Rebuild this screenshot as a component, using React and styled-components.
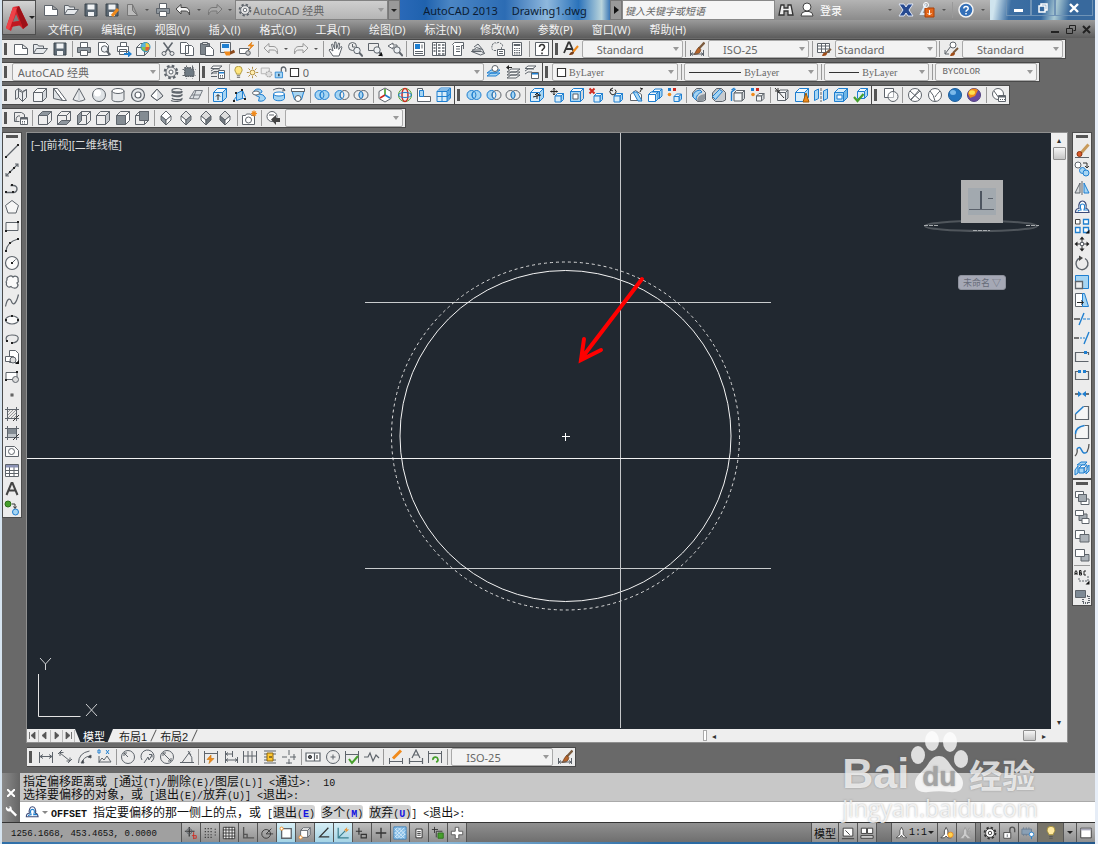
import React from 'react';
import styled, { createGlobalStyle } from 'styled-components';

const COLORS = {
  ink: '#5e646b',
  blue: '#1f7fd0',
  sky: '#a6d5f3',
  frame: '#696969',
  panel: '#ececec',
  canvas: '#212830',
  orange: '#f08a1c',
  red: '#cf2a20',
  green: '#46a02c',
};

const { ink, blue, sky, orange, red, green } = COLORS;

const Box = ({ x = 1.5, y = 5.5, s = 9, d = 4, front = '#f4f5f6', top = '#fafafa', side = '#d4d8dc', stroke = ink }) => (
  <g stroke={stroke}>
    <path d={`M${x} ${y}l${d} ${-d}h${s}l${-d} ${d}z`} fill={top} />
    <path d={`M${x + s} ${y}l${d} ${-d}v${s}l${-d} ${d}z`} fill={side} />
    <path d={`M${x} ${y}h${s}v${s}h${-s}z`} fill={front} />
  </g>
);

const BlueBox = (props) => <Box front="#d9edf9" top="#f2f9fd" side={sky} stroke={blue} {...props} />;

const Face = (props) => <Box s={9} d={4} front="#eee" top="#eee" side="#eee" {...props} />;

const Rings = ({ left = 'none', right = 'none', lens = 'none', ls = ink, rs = ink }) => (
  <>
    <circle cx="5.5" cy="8" r="4.5" fill={left} stroke={ls} />
    <circle cx="10.5" cy="8" r="4.5" fill={right} stroke={rs} />
    <path d="M8 4.3a4.5 4.5 0 0 1 0 7.4a4.5 4.5 0 0 1 0-7.4" fill={lens} stroke={blue} />
  </>
);

const Dots = ({ at, color = '#222' }) => at.map(([x, y]) => (
  <rect key={`${x}-${y}`} x={x - 1} y={y - 1} width="2" height="2" fill={color} stroke="none" />
));

const Lens = ({ x = 9, y = 9 }) => (
  <>
    <circle cx={x} cy={y} r="3.2" fill="#eef1f4" />
    <path d={`M${x + 2.3} ${y + 2.3}l3.5 3.7`} strokeWidth="2" />
  </>
);

const Brush = () => (
  <>
    <path d="M15.5 1.5L9.5 8" stroke="#7b5b3e" strokeWidth="2.4" />
    <path d="M9.8 6.5l2 2c-.5 4-3 5-7 5c2-1.5 2-5 5-7z" fill="#b5642a" stroke="#6a3512" strokeWidth=".7" />
  </>
);

const Bulb = ({ glow = '#ffe680' }) => (
  <>
    <path d="M5.5 10c0-2-2-3-2-5.2a4.5 4.5 0 0 1 9 0c0 2.2-2 3.2-2 5.2z" fill={glow} stroke="#a08a30" />
    <path d="M6 12h4M6 14h4" stroke="#555" />
  </>
);

const Gear = ({ fill = '#e8e8e8' }) => (
  <>
    <circle cx="8" cy="8" r="6.2" strokeWidth="2.2" strokeDasharray="2.6 2.27" />
    <circle cx="8" cy="8" r="5" fill={fill} />
    <circle cx="8" cy="8" r="2" fill="#fff" />
  </>
);

const Layers = () => (
  <path d="M1 12l4-3h9l-4 3zM1 9l4-3h9l-4 3zM1 6l4-3h9l-4 3z" fill="#f4f4f4" />
);

const Diamond = ({ a = '#fff', b = '#fff', c = '#fff' }) => (
  <>
    <path d="M8 1l5 5l-5 4l-5-4z" fill={a} />
    <path d="M3 6l5 4v5l-5-5z" fill={b} />
    <path d="M13 6l-5 4v5l5-5z" fill={c} />
  </>
);

const icons = {
  new: <path d="M1.5 3.5h8l5 4v6h-13zM9.5 3.5v4h5" fill="#fff" />,
  open: <path d="M1.5 12.5v-9h4l1 1.5h5v2.5M1.5 12.5l3-5h11l-4 5z" fill="#e6e9ec" />,
  save: (
    <>
      <path d="M2 2h12v12h-12z" fill="#5c6873" stroke="#3b444c" />
      <path d="M4.5 2.5h7v5h-7zM5 10h6v4h-6z" fill="#f1f3f5" stroke="none" />
    </>
  ),
  saveas: (
    <>
      <path d="M2 2h12v12h-12z" fill="#5c6873" stroke="#3b444c" />
      <path d="M4.5 2.5h7v5h-7zM5 10h6v4h-6z" fill="#f1f3f5" stroke="none" />
      <path d="M8 14l6-7" stroke={orange} strokeWidth="3" />
    </>
  ),
  export: <path d="M3.5 13.5v-11h5l5 11zM8.5 2.5v6l5 5" fill="#bbb" stroke="#777" />,
  print: (
    <>
      <path d="M4.5 6.5v-5h7v5" fill="#fff" />
      <path d="M1.5 6.5h13v5h-13z" fill="#8f979e" />
      <path d="M4.5 9.5h7v5h-7z" fill="#fff" />
    </>
  ),
  preview: <><path d="M2.5 1.5h7l3 3v10h-10z" fill="#fff" /><Lens x={8.5} y={8} /></>,
  publish: (
    <>
      <path d="M4.5 5.5v-4h6v4M1.5 5.5h11v5h-11zM3.5 8.5h7v5h-7z" fill="#fff" />
      <path d="M8 12h4v-2.5l4 3.5l-4 3.5v-2.5h-4z" fill={blue} stroke="none" />
    </>
  ),
  dwf: (
    <>
      <Box x={1.5} y={6.5} s={8} d={4} />
      <circle cx="10.5" cy="6" r="4.5" fill="#7cc45a" stroke="#258cc4" />
      <path d="M10.5 6v-4a4 4 0 0 1 4 4z" fill="#f5c842" stroke="none" />
      <path d="M10.5 6h-4a4 4 0 0 1 4-4z" fill="#58b3e4" stroke="none" />
      <path d="M10.5 6v4a4 4 0 0 0 4-4z" fill="#e2603a" stroke="none" />
    </>
  ),
  cut: (
    <>
      <path d="M3.5 1.5l7 9.5M12.5 1.5l-7 9.5" strokeWidth="1.5" />
      <circle cx="4" cy="12.5" r="2" /><circle cx="12" cy="12.5" r="2" />
    </>
  ),
  copy: <path d="M1.5 1.5h6l2 2v9h-8zM6.5 4.5h6l2 2v8h-8z" fill="#fff" />,
  paste: (
    <>
      <path d="M1.5 2.5h9v11h-9z" fill="#7d858c" />
      <path d="M3.5 1.5h5v2h-5z" fill="#ddd" />
      <path d="M6.5 5.5h5l3 3v6h-8z" fill="#fff" />
    </>
  ),
  match: (
    <>
      <path d="M1.5 1.5h10v10h-10z" fill="#e9f3fb" />
      <path d="M3 3h7v4h-7z" fill={blue} stroke="none" />
      <path d="M15.5 10l-5 2.5" stroke="#8b4a1c" strokeWidth="3" />
      <path d="M5 10.5h6v4h-4z" fill={orange} stroke="none" />
    </>
  ),
  block: (
    <>
      <path d="M1.5 7.5h9v5h-9z" fill="#fff" /><circle cx="10" cy="12" r="2.3" fill="#ccc" />
      <path d="M14 1l-4 4h3l-2 4l5-5h-3z" fill={orange} stroke="#d77508" strokeWidth=".5" />
    </>
  ),
  undo: <path d="M1 7l5-4.5v3h4c3 0 5 2 4.5 7.5c-1-3-2-4-4.5-4h-4v3z" fill="#eee" stroke="#999" />,
  redo: <path d="M15 7l-5-4.5v3h-4c-3 0-5 2-4.5 7.5c1-3 2-4 4.5-4h4v3z" fill="#eee" stroke="#999" />,
  undoDark: <path d="M1 7l5-4.5v3h4c3 0 5 2 4.5 7.5c-1-3-2-4-4.5-4h-4v3z" fill="#f4f4f4" stroke="#444" />,
  redoDark: <path d="M15 7l-5-4.5v3h-4c-3 0-5 2-4.5 7.5c1-3 2-4 4.5-4h4v3z" fill="#aaa" stroke="#777" />,
  pan: <path d="M5 15l-4-6l1-1l3 2l-1.5-6.5l1.2-.5l2 5v-7h1.3l.7 6.5l1.8-5.5l1.2.4l-1 6l2.3-3l1 .8l-3 8.8z" fill="#fff" />,
  zoom: <><circle cx="5.5" cy="5.5" r="4" /><path d="M5.5 3v3h3" /><Lens x={10} y={9.5} /></>,
  zoomwin: (
    <><path d="M9 9.5h-7.5v-7h10v4" fill="none" /><Lens x={10} y={9} /><path d="M15 15v-4l-4 4z" fill="#111" stroke="none" /></>
  ),
  zoomprev: <><path d="M6 8l-5-3l5-3v2h4v2h-4z" fill="#fff" /><Lens x={10} y={9} /></>,
  props: (
    <><path d="M2.5 1.5h11v13h-11z" fill="#fff" /><path d="M4 3h5v5h-5z" fill={blue} stroke="none" /><path d="M4 10.5h8M4 12.5h8M11 3.5v4" /></>
  ),
  center: <><path d="M1.5 1.5h13v13h-13zM5.5 1.5v13" fill="#fff" /><path d="M2.5 4h2M2.5 7h2M2.5 10h2M7 4h2.5M7 7h2.5M7 10h2.5M7 13h2.5M11 4h2.5M11 7h2.5M11 10h2.5M11 13h2.5" strokeWidth="1.7" /></>,
  palette: <path d="M2.5 3.5l2-2h9v3h-2v10h-8v-10zM6 5.5h4M6 8h4M6 10.5h4M13.5 4v4" fill="#fff" />,
  sheet: <path d="M1.5 10.5l5-4l6 2l2 4l-4 1.5zM4 6l4-3l5 6M1.5 10.5l10 0l3 2M2 9l9 0" fill="#e5e7e9" />,
  markup: <><path d="M2.5 4c0-2 3-3 4-1.5c1-1.5 4-1.5 4 0c2 0 3 3 1 4v3h-8c-2-1-2-4-1-5.5z" strokeDasharray="2 1" /><path d="M7.5 8.5h7v6h-7z" fill="#fff" /><path d="M9 10.5h4M9 12.5h4" /></>,
  calc: <><path d="M3.5 1.5h9v13h-9z" fill="#fff" /><path d="M5 3.5h6v1h-6z" fill="#ccc" /><path d="M5 7.5h6M5 9.5h6M5 11.5h6M5 13h6" strokeWidth="1.2" strokeDasharray="1.4 .9" /></>,
  help: <><path d="M1.5 1.5h13v13h-13z" fill="#fff" /><path d="M5.5 6c0-3.5 5-3 5 0c0 2-2.5 2-2.5 4M8 11.5v1.8" strokeWidth="1.6" stroke="#333" /></>,
  textstyle: <><path d="M1 12l4.5-10.5h1l4 9M3 8h6" stroke="#333" strokeWidth="1.8" /><path d="M15 5l-5 6" stroke={orange} strokeWidth="2" /><path d="M6 14c1-3 3-4 5-3c0 3-3 3-5 3z" fill="#7b3e16" stroke="none" /></>,
  dimstyle: <><Brush /><path d="M1.5 9v6M14.5 9v6M2 13h12M4 11.5l-2 1.5l2 1.5M12 11.5l2 1.5l-2 1.5" /></>,
  tablestyle: <><path d="M1.5 2.5h12v9h-12zM1.5 5h12M1.5 8h12M5.5 2.5v9M9.5 2.5v9" fill="#fff" /><path d="M15 8l-5 4" stroke="#7b5b3e" strokeWidth="2" /><path d="M6 15c1-4 3-4 5-3c0 3-3 3-5 3z" fill="#a04d18" stroke="none" /></>,
  leaderstyle: <><circle cx="10" cy="4" r="3" fill="#fff" /><path d="M8 5l-6 8M2 9v4h4" /><path d="M15 7l-5 5" stroke="#7b5b3e" strokeWidth="2" /><path d="M7 15c1-4 3-4 5-3c0 3-3 3-5 3z" fill="#a04d18" stroke="none" /></>,
  gear: <Gear />,
  workspace: <><path d="M3.5 3.5h9v9h-9zM1.5 5.5h13M1.5 11.5h13M5.5 1.5v13M11.5 1.5v13" strokeDasharray="1.5 1" /><path d="M4 4h5l4 3v5h-9z" fill="#6f7a83" /></>,
  layerprops: <><path d="M3 2h9l-3 2.5h-8zM1 7l3-2h6M1 9.5l3-2h4M1 12.5h6M1 10l2-1h4" fill="#fff" /><path d="M8.5 6.5h6v8h-6z" fill="#fff" /><path d="M9 8h5v1.5h-5z" fill={blue} stroke="none" /><path d="M10 11.5h4M10 13h4" strokeDasharray="1 1" /></>,
  bulb: <Bulb />,
  sun: <><circle cx="8" cy="8" r="3" fill="#ffeeb0" stroke="#a07820" /><path d="M8 1v2.5M8 12.5v2.5M1 8h2.5M12.5 8h2.5M3 3l2 2M11 11l2 2M13 3l-2 2M5 11l-2 2" stroke="#a07820" /></>,
  vpfreeze: <><path d="M1.5 2.5h10v7h-10z" fill="#eee" stroke="#aaa" /><circle cx="11" cy="10" r="3.5" fill="#ddd" stroke="#aaa" strokeWidth="1.5" strokeDasharray="2 1" /></>,
  unlock: <><path d="M9 7v-3a2.5 2.5 0 0 1 5.5 0v3" stroke={ink} strokeWidth="1.6" /><path d="M1.5 7.5h9v7h-9z" fill={sky} stroke={blue} /><path d="M6 9.5v3" stroke="#123" strokeWidth="1.5" /></>,
  swatch: <path d="M3 3h10v10h-10z" fill="#fff" stroke="#333" strokeWidth="1.3" />,
  layermake: <><path d="M1 12l4-3h9l-4 3zM1 9l4-3h9l-4 3z" fill={sky} stroke={blue} /><circle cx="9" cy="4.5" r="3" fill="#fff" /></>,
  layerprev: <><g transform="translate(1 2)"><Layers /></g><path d="M1 3.5l3-2.5v5z" fill="#222" stroke="none" /><path d="M3 3.5h4" stroke="#222" /></>,
  layerstate: <><path d="M4 2h8l-3 2.5h-8zM1 7l3-2h6M1 10l3-2h4" fill="#fff" /><path d="M7.5 8.5h7v6h-7z" fill="#fff" /><path d="M8 9h6v1.5h-6z" fill={blue} stroke="none" /></>,
  polysolid: <path d="M2.5 3.5l3-2v9l-3 2zM5.5 3.5l4 2v9l-4-4M9.5 5.5l4-3v8l-4 4M5.5 1.5l4 3l4-2" fill="#e8eaec" />,
  box: <Box />,
  wedge: <><path d="M1.5 1.5l4 0l9 12l-4 0z" fill="#fff" /><path d="M1.5 1.5v10l9 2z" fill="#dfe3e6" /></>,
  cone: <><path d="M8 1.5l-6 11q6 3.5 12 0z" fill="#e8eaec" /><path d="M8 4v10" stroke="#d2d6da" strokeWidth="2" /></>,
  sphere: <><circle cx="8" cy="8" r="6.5" fill="#dfe3e6" /><circle cx="6.5" cy="6" r="3.5" fill="#fff" stroke="none" /></>,
  cylinder: <><path d="M2 4v8.5c0 3 12 3 12 0v-8.5" fill="#e8eaec" /><ellipse cx="8" cy="4" rx="6" ry="2.5" fill="#fff" /></>,
  torus: <><circle cx="8" cy="8" r="6.5" fill="#e8eaec" strokeWidth="1.2" /><circle cx="8" cy="8" r="3" fill="#fff" strokeWidth="1.2" /></>,
  pyramid: <><path d="M8 2l-6 7l6 4.5l6-4.5z" fill="#fff" /><path d="M8 2v11.5l6-4.5z" fill="#dcdfe2" stroke="none" /><path d="M14 9l-6 4.5l-6-4.5l6-7z" /></>,
  helix: <path d="M13 3c-3-2.5-11-1.5-10 .5s10 1.5 10 .5M13 4.5c1 2.5-11 2-10 0M3 7.5c1 2 11 1.5 10-.5M13 7.5c1 3-11 2.5-10 .5M3 11c1 2.5 11 2 10 0M13 11.5c0 3.5-8 3.5-11 2" strokeWidth="1.2" />,
  planar: <path d="M1.5 11.5l5-8l8 0l-4 8.5zM4 8l9 0M8 3.5l-3 8" fill="#dfe3e6" stroke="#777d84" />,
  extrude: <><BlueBox /><path d="M6 13v-5M4 9.5l2-2l2 2" stroke="#222" /></>,
  presspull: <><path d="M4.5 6.5l6-3v8l-6 2zM10.5 3.5l3 7M10.5 11.5l3 0M1.5 13.5l3-4" fill={sky} stroke={blue} /><Dots at={[[4, 6], [10, 3], [2, 14], [13, 12]]} /></>,
  sweep: <><path d="M3 5c0-4 8-4 8 0l-3 2q5 0 6.5 4q-1 4-7 3l1-4q-5-1-5.5-5z" fill={sky} stroke={blue} /><ellipse cx="5" cy="6" rx="3.5" ry="2" fill="#fff" stroke={ink} /></>,
  revolve: <><path d="M2.5 7v4.5c1 3 10 3 11 0v-4.5" fill={sky} stroke={blue} /><ellipse cx="8" cy="7" rx="5.5" ry="2" fill="#fff" stroke={blue} /><path d="M2 3q6-3.5 12 0M12 1l2 2.5l-3 .5" /></>,
  loft: <><path d="M1.5 2.5l3 10h7l3-10z" fill={sky} stroke={blue} /><path d="M1.5 1.5h13v3h-13z" fill="#fff" /><circle cx="8" cy="11.5" r="3" fill="#fff" /></>,
  union: <Rings left={sky} right={sky} ls={blue} rs={blue} />,
  subtract: <Rings left={sky} ls={blue} right="#ececec" />,
  intersect: <Rings lens={sky} />,
  gizmo: <><path d="M8 1l6 3.5v7l-6 3.5l-6-3.5v-7z" fill="#fff" /><path d="M8 8v-6" stroke={green} strokeWidth="1.6" /><path d="M8 8l-5 3" stroke={red} strokeWidth="1.6" /><path d="M8 8l5 3" stroke={blue} strokeWidth="1.6" /></>,
  rotate3d: <><circle cx="8" cy="8" r="6.5" stroke={green} /><ellipse cx="8" cy="8" rx="3" ry="6.5" stroke={red} strokeWidth="1.5" /><ellipse cx="8" cy="8" rx="6.5" ry="2.5" stroke={blue} /></>,
  align: <><path d="M1.5 1.5h5v8h8v5h-13z" fill="#fff" /><path d="M3.5 3.5h4v6h-4z" fill={sky} stroke={blue} /></>,
  array3d: <><BlueBox x={1} y={4.5} s={10} d={3.5} /><path d="M1 9.5h10l4-3M6 4.5v10M3 3h10v9" stroke={blue} /></>,
  extrudeface: <><BlueBox /><path d="M8 12v-6M6 8l2-2l2 2M4 10l8-2" stroke="#222" /></>,
  moveface: <><BlueBox x={6} y={9} s={6} d={2.5} /><path d="M5 1v7M1.5 4.5h7M4 2.3l1-1l1 1M4 6.8l1 1l1-1M2.8 3.5l-1 1l1 1M7.3 3.5l1 1l-1 1" stroke="#222" /></>,
  offsetface: <><Box x={1.5} y={4.5} s={10} d={3} stroke={blue} front={sky} /><path d="M4 7h5v5h-5z" fill="#fff" /></>,
  deleteface: <><BlueBox x={6} y={9} s={6} d={2.5} /><path d="M1.5 1.5l5 5M6.5 1.5l-5 5" stroke={red} strokeWidth="2" /></>,
  rotateface: <><BlueBox x={6} y={9} s={6} d={2.5} /><path d="M3 2.5a3 3 0 1 0 4 0M5 1l-3 1.5l3 1.5" stroke="#222" /></>,
  taperface: <><path d="M2.5 13.5v-6l5-4l6 4v6z" fill="#fff" /><path d="M5 5l5 9h4l-5-9z" fill={sky} stroke={blue} /><path d="M14 1l-2 4M12 1l3 1" stroke="#222" /></>,
  copyface: <><BlueBox x={5.5} y={4.5} s={7} d={2.5} /><BlueBox x={1.5} y={7.5} s={7} d={2.5} front="#fff" /></>,
  colorface: <><BlueBox x={7} y={9.5} s={5} d={2.5} /><path d="M1 1h3v3h-3z" fill={blue} stroke="none" /><path d="M6 1h3v3h-3z" fill={red} stroke="none" /><circle cx="2.5" cy="7.5" r="1.8" fill={orange} stroke="none" /></>,
  filletedge: <><path d="M1.5 6l4-4.5h5l4 4v7.5l-3 1.5h-5l-5-5z" fill="#d4d8dc" /><path d="M6 14q0-6 8-7v5l-3 2.5z" fill="#8f979e" stroke="none" /><path d="M2 10q0-6 7-7l2 2q-6 2-6 8z" fill={sky} stroke={blue} /></>,
  chamferedge: <><path d="M1.5 6l4-4.5h5l4 4v7.5l-3 1.5h-7l-3-3z" fill="#c6cbd0" /><path d="M1.5 9.5l7-7l3 2l-7 8z" fill={sky} stroke={blue} /></>,
  copyedge: <><Box x={4} y={6} s={8} d={2.5} /><path d="M1.5 14v-9l4-3M1.5 3l3-2" stroke={blue} strokeWidth="1.4" /></>,
  coloredge: <><Box x={6.5} y={9} s={5} d={2.5} /><path d="M1 1h3v3h-3z" fill={blue} stroke="none" /><path d="M6 1h3v3h-3z" fill={red} stroke="none" /><circle cx="3" cy="7.5" r="1.8" fill={orange} stroke="none" /></>,
  imprint: <><Box x={3.5} y={5.5} s={8} d={2.5} /><path d="M1 1l9 10M1 4h5M4 1v5" stroke="#333" /></>,
  clean: <><BlueBox /><path d="M12 6l-3 9h6z" fill={orange} stroke="#9c5a08" /></>,
  separate: <><path d="M1.5 4l4-2v9.5l-4 2zM10.5 4l4-2v9.5l-4 2z" fill={sky} stroke={blue} /><path d="M8 1v14" strokeDasharray="3 1" /></>,
  shell: <><Box front={sky} top="#d9edf9" side="#6fb5e4" stroke={blue} /><path d="M4 8h5v4h-5z" fill="#fff" stroke={blue} /></>,
  check: <><BlueBox x={4.5} y={4.5} s={7} d={3} /><path d="M1 10l3.5 4l6-7" stroke={green} strokeWidth="2.2" /></>,
  wire2d: <><path d="M1.5 1.5h9v9h-9z" fill="#fff" /><circle cx="10" cy="9.5" r="5" fill="#fff" fillOpacity=".5" /></>,
  wire3d: <><circle cx="8" cy="8" r="6.5" fill="#fff" /><path d="M3 4l10 9M13 4l-10 9M4 13q4-5 8-10" /></>,
  hidden: <><circle cx="8" cy="8" r="6.5" fill="#fff" /><path d="M3 4q4 4 5 10M13 4q-4 4-5 6" /></>,
  realistic: <><circle cx="8" cy="8" r="6.5" fill="#2375c0" stroke="#1c5c98" /><ellipse cx="6" cy="5.5" rx="3" ry="2.5" fill="#7bb9ea" stroke="none" /></>,
  conceptual: <><circle cx="8" cy="8" r="6.5" fill="#6a4aa0" stroke="#514080" /><path d="M2 7a6 6 0 0 1 10-4l-3 6l-5 2z" fill={orange} stroke="none" /><ellipse cx="6" cy="5.5" rx="3" ry="2.3" fill="#ffe14d" stroke="none" /></>,
  vsmanager: <><circle cx="7" cy="7" r="5.5" fill="#fff" /><path d="M3 4l5 7" /><path d="M7.5 8.5h7v6h-7z" fill="#fff" /><path d="M8 9h6v1.5h-6z" fill={ink} stroke="none" /><path d="M9 12.5h5" strokeDasharray="1 1" /></>,
  namedview: <><path d="M1.5 2.5h7l3 2v3M1.5 2.5v9h5" fill="none" /><path d="M3 11q0-6 4-5" /><path d="M7.5 7.5h7v7h-7z" fill="#fff" /><path d="M8 8h6v1.5h-6z" fill={ink} stroke="none" /><path d="M9 11.5h4M9 13h4" strokeDasharray="1 1" /></>,
  vtop: <Face top="#8f979e" />,
  vbottom: <><Face /><path d="M1.5 14.5l4-4h9l-4 4z" fill="#8f979e" /></>,
  vleft: <><Face /><path d="M1.5 5.5l4-4v9l-4 4z" fill="#8f979e" /></>,
  vright: <Face side="#c4c8cc" />,
  vfront: <Face front="#838b92" side="#fff" />,
  vback: <><Face /><path d="M5.5 1.5h9v9h-9z" fill="#838b92" /></>,
  isosw: <Diamond b="#8f979e" />,
  isose: <Diamond c="#8f979e" a="#e4e4e4" />,
  isone: <Diamond c="#6f777e" a="#ddd" />,
  isonw: <Diamond a="#ddd" b="#6f777e" />,
  camera: <><path d="M1.5 5.5h3l1-1.5h4l1 1.5h3v9h-12z" fill="#fff" /><circle cx="7.5" cy="10" r="3" /><path d="M13 .5v6M10 3.5h6M11 1.5l4 4M15 1.5l-4 4" stroke={orange} strokeWidth="1.2" /></>,
  viewprev: <><circle cx="7" cy="6.5" r="5" fill="#fff" /><path d="M6 9.5l5-4.5v3h4v4h-4v3z" fill="#444" stroke="none" /><path d="M4 5h5" /></>,
  line: <><path d="M2.5 13.5l11-11" strokeWidth="1.2" /><Dots at={[[2, 14], [14, 2]]} /></>,
  xline: <><path d="M2 14l12-12M2 11v3h3M11 2h3v3" strokeWidth="1.1" /><Dots at={[[6, 10], [10, 6]]} /></>,
  pline: <><path d="M1.5 12.5h8a3.5 3.5 0 0 0 0-7h-3" strokeWidth="1.4" /><Dots at={[[2, 12], [9, 12], [8, 5]]} /></>,
  polygon: <path d="M8 1.5l6.5 5l-2.5 7.5h-8l-2.5-7.5z" fill="#f6f6f6" />,
  rect: <><path d="M2 4.5h12v8h-12z" fill="#f3f3f3" /><Dots at={[[2, 13], [14, 4]]} /></>,
  arc: <><path d="M2 14q1-9 12-12" strokeWidth="1.2" /><Dots at={[[2, 14], [6, 6], [14, 2]]} /></>,
  circle: <><circle cx="8" cy="8" r="6.5" strokeWidth="1.2" fill="#fafafa" /><path d="M8 8l3.5-3.5" /><Dots at={[[8, 8]]} /></>,
  revcloud: <path d="M5 2.5a3 3 0 0 1 4 .5a3 3 0 0 1 5 3q1 2-1 3a3 3 0 0 1-3 5q-2 0-3-1.5a3 3 0 0 1-4.5-3.5q-1-1 .5-3a3 3 0 0 1 2-3.5z" fill="#fafafa" strokeWidth="1.2" />,
  spline: <path d="M1.5 13.5c2-10 5-8 6-5s4 5 7-7" strokeWidth="1.2" />,
  ellipse: <><ellipse cx="8" cy="8" rx="6.5" ry="4" fill="#fafafa" strokeWidth="1.2" /><Dots at={[[2, 8], [14, 8], [8, 4]]} /></>,
  ellarc: <><path d="M2.5 10q-2-6 5.5-6t6 4.5q-1 3-6 3.5" strokeWidth="1.2" /><Dots at={[[3, 10], [8, 12]]} /></>,
  insert: <><path d="M5.5 1.5h6l3 3v9h-9z" fill="#fff" /><path d="M1.5 7.5h8v5h-8z" fill="#fff" /><circle cx="9" cy="11" r="3" fill="#ddd" /><path d="M15 15v-4l-4 4z" fill="#111" stroke="none" /></>,
  mkblock: <><path d="M2 4.5h11v7h-11z" fill="#fff" /><circle cx="11.5" cy="11.5" r="3" fill="#ddd" /><Dots at={[[2, 12], [13, 4]]} /></>,
  point: <rect x="7" y="7" width="2" height="2" fill="#999" stroke="#555" />,
  hatch: <><path d="M3.5 1v14M1 3.5h14M12.5 1v14M1 12.5h14" /><path d="M4 6l2-2M4 9l5-5M4 12l8-8M7 12l5-5M10 12l2-2" stroke="#999" /><path d="M9 15l6-6" stroke="#333" /></>,
  gradient: <><path d="M4 4h9v5h-9z" fill="#838b92" stroke="none" /><path d="M4 9h9v4h-9z" fill="#c0c5c9" stroke="none" /><path d="M3.5 1v14M1 3.5h14M12.5 1v14M1 12.5h14" /><path d="M9 15l6-6" stroke="#333" /></>,
  region: <><path d="M1.5 3.5h9l4 4v6h-13z" fill="#fafafa" /><circle cx="7.5" cy="8.5" r="3" fill="#fff" /></>,
  table: <><path d="M1.5 2.5h13v12h-13zM1.5 8.5h13M1.5 11.5h13M5.5 5v9.5M10 5v9.5" fill="#fff" /><path d="M2 3h12v2.5h-12z" fill="#8b92b5" stroke="none" /></>,
  mtext: <path d="M2.5 14l5-12h1l5 12M4.5 9.5h7" stroke="#444" strokeWidth="2" />,
  addsel: <><circle cx="4" cy="4" r="3" fill={green} stroke="#2d701b" /><circle cx="11.5" cy="12" r="3" fill={sky} stroke={blue} /><path d="M8 4h3v4M9.5 6.5l1.5 2l1.5-2" stroke="#333" /></>,
  erase: <><path d="M14.5 1.5l-7 8" stroke="#c89a5a" strokeWidth="3" /><circle cx="5.5" cy="11" r="2.5" fill="#dc5a28" stroke="#8d3310" /><path d="M1 14.5h14" /></>,
  mcopy: <><circle cx="4" cy="4" r="3" fill="#fff" /><path d="M9 2h4v4M11 5l2 2l2-2" stroke="#333" /><circle cx="8.5" cy="9.5" r="3" fill={sky} stroke={blue} /><circle cx="12" cy="12" r="3" fill={sky} stroke={blue} /></>,
  mirror: <><path d="M6 3v10h-5z" fill="#d6d9dc" /><path d="M10 3v10h5z" fill={sky} stroke={blue} /><path d="M8 1v14" /></>,
  offset: <><path d="M1.5 13.5c0-3 1-4 3.5-4c-2-10 9-10 7 0q2.5 0 3 4z" fill="#fff" stroke="#3a4a78" strokeWidth="1.2" /><path d="M4 12.5q0-1.500 3-1.500q-2-6 1.500-6t1.500 6h4" stroke={blue} strokeWidth="1.2" /></>,
  array: <><path d="M1.5 1.5h4.5v4.5h-4.5z" fill="#fff" stroke="#444" /><path d="M9.5 1.5h5v4.5h-5zM1.5 9.5h4.5v5h-4.5zM9.5 9.5h5v5h-5z" fill="#fff" stroke={blue} strokeWidth="1.3" /><path d="M15.5 15.5v-4l-4 4z" fill="#111" stroke="none" /></>,
  move: <><path d="M8 2v12M2 8h12" stroke="#333" /><path d="M8 .5l2.5 3h-5zM8 15.5l2.5-3h-5zM.5 8l3-2.5v5zM15.5 8l-3-2.5v5z" fill="#222" stroke="none" /><path d="M6.5 6.5h3v3h-3z" fill="#fff" /></>,
  rotate: <><path d="M11 3.5a6 6 0 1 1-5-.5" strokeWidth="1.4" /><path d="M5 .5l4 2.5l-4 3z" fill="#444" stroke="none" /></>,
  scale: <><path d="M1.5 1.5h13v13h-13z" fill={sky} stroke={blue} /><path d="M1.5 7.5h7v7h-7z" fill="#eee" strokeWidth="1.3" /></>,
  stretch: <><path d="M1.5 1.5h7v13h-7z" fill="#fff" /><path d="M8.5 1.5h2l4 13h-6z" fill={sky} stroke={blue} /><path d="M3 10.5h6M7 8.5l2.5 2l-2.5 2" stroke="#222" /></>,
  trim: <><path d="M0 8h6" stroke="#333" strokeWidth="1.3" /><path d="M5 14l5-12" stroke={blue} strokeWidth="1.4" /><path d="M9 8h7" stroke={blue} strokeDasharray="3 1" /></>,
  extend: <><path d="M0 8h5" stroke="#333" strokeWidth="1.3" /><path d="M6 8h5" stroke={blue} strokeDasharray="2 1" /><path d="M10 14l5-12" stroke={blue} strokeWidth="1.4" /></>,
  breakpt: <><path d="M14.5 6v-2.5h-13v9h13" strokeWidth="1.2" /><path d="M10 2h3v3h-3z" fill={blue} stroke="none" /></>,
  break: <><path d="M4 4.5h-2.5v8h13v-8h-2.5" strokeWidth="1.2" /><path d="M4 3h3v3h-3zM9 3h3v3h-3z" fill={blue} stroke="none" /></>,
  join: <><path d="M1 8h4M11 8h4" stroke="#444" strokeWidth="1.3" /><path d="M4 5l4 3l-4 3zM12 5l-4 3l4 3z" fill={blue} stroke="none" /></>,
  chamfer: <><path d="M1.5 9v5.5h13v-13h-5" fill="#f6f6f6" strokeWidth="1.2" /><path d="M1.5 9l8-7.5" stroke={blue} strokeWidth="1.5" /></>,
  fillet: <><path d="M1.5 10v4.5h13v-13h-4" fill="#f6f6f6" strokeWidth="1.2" /><path d="M1.5 10q0-7 9-8.5" stroke={blue} strokeWidth="1.5" /></>,
  blend: <><path d="M1 14q3-3 2-7" stroke="#555" strokeWidth="1.3" /><path d="M3 7c5-6 4 8 10 3" stroke={blue} strokeWidth="1.5" /><path d="M13 10q2-4 2-8" stroke="#555" strokeWidth="1.3" /></>,
  explode: <><path d="M1 9l3-4v7l-3 2zM12 8l3-4v6l-3 3zM3 4l4-3h6l-3 3z" fill={sky} stroke={blue} /><Box x={5} y={7} s={5} d={3} front={sky} stroke={blue} /></>,
  front: <><path d="M7 9h8v5.5h-8zM1.5 1.5h8v6h-8z" fill="#fff" /><path d="M4.5 4.5h8v7h-8z" fill="#a4abb1" /></>,
  back: <><path d="M5 5h8v6.5h-8z" fill="#a4abb1" /><path d="M1.5 1.5h8v5h-8zM8 9.5h7v5h-7z" fill="#fff" /></>,
  above: <><path d="M1.5 2.5h9v8h-9z" fill="#fff" /><path d="M6 6.5h9v7.5h-9z" fill="#adb3b9" /></>,
  under: <><path d="M7 7.5h8v6.5h-8z" fill="#adb3b9" /><path d="M1.5 2.5h9v7h-9z" fill="#fff" /></>,
  abc: <><path d="M1 6v-3l1-1.5l1 1.5v3M1 4.5h2M5.5 1.5v4.5h2v-2h-2h1.5v-2.5zM12 2h-2v4h2" stroke="#222" /><path d="M14 7v5h-9v-3" strokeDasharray="2 1" /><path d="M15.5 15.5v-4l-4 4z" fill="#111" stroke="none" /></>,
  hatchback: <><path d="M9 8h6v7h-6z" fill="none" strokeDasharray="1 1" strokeWidth="2" /><path d="M1.5 2.5h10v7h-10z" fill="#7e8a95" /></>,
  dlinear: <path d="M1.5 3v11M14.5 3v11M2 7.5h12M5 5.5l-3 2l3 2M11 5.5l3 2l-3 2" />,
  daligned: <path d="M1 5l4-4M11 14l4-4M3 4l10 8M3 7v-3.5h3.5M13 8.5v3.5h-3.5" />,
  darc: <><path d="M1.5 14q0-10 11-12M5 14q1-6 8-7" /><path d="M4 14h3l-1-3zM14 6v3l-3-1z" fill="#222" /></>,
  dord: <><path d="M3 14v-7M3 13h12l-4-6l-3 4l-2-2z" /><path d="M2 1v3h2v-3zM10 1l3 4M13 1l-3 4" stroke={blue} /></>,
  drad: <><circle cx="8" cy="8" r="6.5" /><path d="M8 8l-4-4M4 7v-3h3" /></>,
  djog: <><path d="M2 11a6.5 6.5 0 1 1 9 2" /><path d="M4 14l4-6l1 3l3-5M9 5.5h3v3" /></>,
  ddia: <><circle cx="8" cy="8" r="6.5" /><path d="M4 4l8 8M4 7v-3h3M12 9v3h-3" /></>,
  dang: <path d="M1 13.5h14M3 13.5l8-11M10 4q4 4 3 9M9 2l3 4" />,
  dquick: <><path d="M1.5 2v12M14.5 2v12M2 4.5h12" /><path d="M8 6l-4 4.5h3l-1 4l5-5h-3z" fill={orange} stroke="#c87406" strokeWidth=".6" /></>,
  dbase: <path d="M2.5 2v12M9.5 2v6M14.5 8v6M3 5h6M3 11h11M5 3.5l-2 1.5l2 1.5M5 9.5l-2 1.5l2 1.5M12 9.5l2 1.5l-2 1.5" />,
  dcont: <path d="M1.5 2v12M6 2v12M10 2v12M14.5 2v12M2 7h12" />,
  dspace: <><path d="M2 2h12M2 14h12M2 8h3M2 5h12M2 11h12" /><path d="M5 4h6v8h-6z" fill="#ffc62e" stroke="#8c6610" /><path d="M7 8h3" stroke="#222" /></>,
  dbreak: <path d="M1 8h5M9 8h6M8 1v5M8 10v5M13 5v6M5 14h6" />,
  tol: <><path d="M1 4h14v8h-14zM9.5 4v8" fill="#fff" strokeWidth="1.2" /><circle cx="5" cy="8" r="1.7" /><path d="M3 8h4M5 6v4M12 6v4" stroke="#222" /></>,
  cmark: <><circle cx="8" cy="8" r="6.5" /><path d="M5.5 8h5M8 5.5v5" /></>,
  dinspect: <><path d="M1.5 2v12M14.5 2v12M2 5.5h12" /><path d="M5 10l3 4l6-7" stroke={green} strokeWidth="2" /></>,
  djogline: <path d="M0 8h4l2-4l3 8l3-6l3 3" strokeWidth="1.2" />,
  dedit: <><path d="M13 1.5l-8 8" stroke={orange} strokeWidth="3" /><path d="M1.5 9v6M14.5 9v6M2 12.5h12" /></>,
  dtedit: <path d="M4 9l4-8l4 8M5.5 6h5M1.5 9v6M14.5 9v6M2 12.5h12" strokeWidth="1.2" />,
  dupdate: <><path d="M1.5 2v12M14.5 2v12M2 4.5h12" /><path d="M6 11a2.5 2.5 0 1 1 3 2" stroke={green} strokeWidth="1.7" /></>,
  binoc: <path d="M3 3h3v3h4v-3h3l2 10h-5v-4h-4v4h-5z" fill="#eee" stroke="#333" strokeWidth="1.3" />,
  user: <><circle cx="8" cy="5" r="4" fill="#fff" stroke="#444" /><path d="M2 14q0-4 4-4.5h4q4 .5 4 4.5z" fill="#fff" stroke="#444" /></>,
  exchange: <path d="M1 2h5l2 3l2-3h5l-4 6l4 6h-5l-2-3l-2 3h-5l4-6z" fill="#274a90" stroke="#dfe6f5" />,
  connect: <><path d="M7 2l-5 10h5" stroke="#d8e8f8" strokeWidth="2" /><path d="M6 6h9v9h-9z" fill="#e2661a" stroke="#a94108" /><path d="M10.5 8v5M8.5 11l2 2l2-2" stroke="#fff" /><circle cx="7" cy="3" r="2.5" stroke="#fff" /></>,
  question: <><circle cx="8" cy="8" r="7" fill="#3470b8" stroke="#f4f4f4" strokeWidth="1.5" /><path d="M5.8 6.5c0-3 4.4-2.5 4.4 0c0 1.8-2.2 1.5-2.2 3.3M8 11v1.5" stroke="#fff" strokeWidth="1.5" /></>,
  infer: <><path d="M6 1v11M1 6h11" strokeWidth="1.4" stroke="#333" /><circle cx="6" cy="6" r="3" /><path d="M11 7v8M9 11h5v3h-3" stroke={red} /></>,
  snap: <path d="M2 3h9M2 6.5h9M2 10h9M2 13h9M14 3v9" stroke="#333" strokeWidth="1.3" strokeDasharray="1.3 2" />,
  grid: <path d="M1.5 1.5h13v13h-13zM4.5 1v14M8 1v14M11.5 1v14M1 4.5h14M1 8h14M1 11.5h14" stroke="#333" fill="#eee" />,
  ortho: <path d="M3 1v12.5h12M3 9.5h4v4" strokeWidth="1.5" stroke="#555" />,
  polar: <><circle cx="7" cy="9" r="5" stroke="#333" /><path d="M7 9h8M7 9l6-6" stroke="#333" /></>,
  osnap: <><path d="M3 3h11v11h-11z" fill="#fff" strokeWidth="1.5" /><circle cx="3" cy="3" r="1.8" fill="#fff" stroke={orange} /></>,
  osnap3d: <><Box x={3} y={5} s={8} d={3} front="#fff" /><circle cx="3" cy="13" r="1.8" fill="#fff" stroke={orange} /></>,
  otrack: <path d="M13 2l-10 10.5h11" stroke="#333" strokeWidth="1.4" />,
  ducs: <><path d="M2.5 2v11.5h12M2.5 13.5l8-8" stroke="#3a7f8f" strokeWidth="1.4" /><path d="M13 1l-4 4h3l-2 3l5-4h-3z" fill={orange} stroke="none" /></>,
  dyn: <path d="M1 6h7M4.5 2v8M7 9.5h6v4h-6z" stroke="#333" strokeWidth="1.3" />,
  lwt: <path d="M8 2v12M2 8h12" stroke="#333" strokeWidth="1.5" />,
  tpy: <><path d="M1 1h14v14h-14z" fill="#86bde6" stroke="#3d82bd" /><path d="M2 5l3-3M2 9l7-7M2 13l11-11M5 14l9-9M9 14l5-5M2 11l3 3M2 7l7 7M2 3l11 11M6 2l8 8" stroke="#d8ecf9" /></>,
  qp: <><path d="M4.5 3.5h7v10h-7z" fill="#fff" stroke="#222" /><path d="M6 6.5h4M6 8.5h4M6 10.5h4" stroke="#222" /></>,
  sc: <><path d="M1 4h7M4 1v7" stroke="#333" /><path d="M6 6h7M6 6v7" stroke="#333" /><path d="M8 8h6v6h-6z" fill={green} stroke="#2d701b" /></>,
  am: <path d="M6 1.5h4v4.5h4.5v4h-4.5v4.5h-4v-4.5h-4.5v-4h4.5z" fill="#fff" stroke="#555" />,
  model: <><path d="M2.5 2.5h11v9h-11z" fill="#fff" stroke="#333" /><path d="M5 5l5 5M1 14.5h14" stroke="#333" /></>,
  layouts: <><path d="M1.5 2.5h6v6h-6zM8.5 2.5h6v6h-6z" fill="#fff" stroke="#333" /><path d="M1 11h14v3h-14z" fill="#ddd" stroke="#333" /></>,
  anno: <path d="M8 1.5l2 4v5l4.5 4h-4l-2.5-3l-2.5 3h-4l4.5-4v-5z" fill="#fff" stroke="#444" />,
  annovis: <><path d="M7 1.5l2 4v4l4 4h-4l-2-2l-2 2h-4l4-4v-4z" fill="#fff" stroke="#444" /><circle cx="12" cy="10" r="3" fill="#ffd34e" stroke={orange} /></>,
  annoauto: <path d="M7 1.5l2 4v4l5 5h-4l-3-3l-2 3h-4l4-5v-4zM12 2l-2 4h3l-2 4" fill="#ccc" stroke="#999" />,
  gearDark: <g stroke="#333"><Gear fill="#fff" /></g>,
  lock: <><path d="M9 7v-3a2.5 2.5 0 0 1 5.5 0v3" stroke="#555" strokeWidth="1.6" /><path d="M2 7.5h8v6.5h-8z" fill="#fff" stroke="#444" /><path d="M6 9.5v3" /></>,
  hardware: <><path d="M1 3.5h11v6h-11zM3 1.5v2M6 1.5v2M9 1.5v2M3 9.5v2M6 9.5v2" fill="#8aa0b5" stroke="#6b7f93" /><circle cx="12" cy="9.5" r="2.5" fill="#fff" stroke={blue} /><path d="M12 12v3" stroke={blue} /></>,
  isolate: <Bulb glow="#ffe9a0" />,
  cleanscreen: <><path d="M2 2.5h12v11h-12z" fill="#fff" stroke="#333" /><path d="M2 3h12v2h-12z" fill="#aab" stroke="none" /></>,
  wrench: <path d="M14 14l-7-7q-3 1-5-1.5t0-4.5l2 2.5l2-.5l.5-2l-2-.5q5-1 4.5 4l7 7z" fill="#fff" stroke="none" />,
};

const Icon = ({ id, size = 16 }) => (
  <svg width={size} height={size} viewBox="0 0 16 16" fill="none" stroke={ink} aria-hidden="true">
    {icons[id]}
  </svg>
);

const Tools = ({ items, vertical }) => items.split(' ').map((id, i) => {
  if (id === '|') return <Separator key={i} $vertical={vertical} />;
  if (id === 'v') return <MoreButton key={i} aria-label="more"><Caret $small /></MoreButton>;
  return <ToolButton key={i} aria-label={id}><Icon id={id} /></ToolButton>;
});

const Picker = ({ label, value, width, indent, face, sample }) => (
  <PickerBox $width={width} $grow={!width}>
    {sample && <Sample $width={sample} />}
    <PickerSelect aria-label={label} defaultValue={value} $indent={indent} $face={face}>
      <option>{value}</option>
    </PickerSelect>
    <PickerArrow />
  </PickerBox>
);

// Command line: full-width and half-width runs use different faces.
const Mixed = ({ children }) => children.split(/([\x20-\x7e]+)/).map((part, i) => (
  i % 2 ? <Half key={i}>{part}</Half> : part
));

const MENUS = ['文件(F)', '编辑(E)', '视图(V)', '插入(I)', '格式(O)', '工具(T)', '绘图(D)', '标注(N)', '修改(M)', '参数(P)', '窗口(W)', '帮助(H)'];

const TOGGLES = 'infer snap grid ortho polar osnap osnap3d otrack ducs dyn lwt tpy qp sc am'.split(' ');
const ACTIVE = ['osnap', 'otrack', 'ducs'];

const NAV = {
  first: 'M1.5 1v7M7 1v7l-4-3.5z',
  previous: 'M6 1v7l-4-3.5z',
  next: 'M3 1v7l4-3.5z',
  last: 'M7.5 1v7M2 1v7l4-3.5z',
};

const DRAW = 'line xline pline polygon rect arc circle revcloud spline ellipse ellarc insert mkblock point hatch gradient region table mtext addsel';
const MODIFY = 'erase mcopy mirror offset array move rotate scale stretch trim extend breakpt break join chamfer fillet blend explode';

const Header = () => (
  <HeaderGrid>
    <AppButton aria-label="application menu">
      <svg width="25" height="30" viewBox="0 0 25 30" aria-hidden="true">
        <path d="M2 25L9 4l6-1l9 19l-5 4l-4-4l-6 1l-2 5z" fill="#d5222a" />
        <path d="M15 3l9 19l-5 4L12 6z" fill="#9d1219" />
        <path d="M2 25L9 4l4 1l-3 10l-5 12z" fill="#ee4248" />
        <path d="M12 11l3 7l-6 1z" fill="#7d7d7d" />
        <path d="M8 19l8-1l2 4l-11 2z" fill="#c01820" />
      </svg>
      <Caret />
    </AppButton>
    <TitleBar>
      <QuickAccess>
        <Tools items="new open save saveas export v print undoDark v redoDark v" />
      </QuickAccess>
      <WorkspaceBox>
        <Icon id="gear" size={14} />
        <Picker label="workspace" value="AutoCAD 经典" indent={1} />
      </WorkspaceBox>
      <TitleMore aria-label="customize"><Caret /></TitleMore>
      <Title><span>AutoCAD 2013</span><span>Drawing1.dwg</span></Title>
      <TitleMore aria-label="search history">
        <svg width="5" height="8"><path d="M0 0l5 4l-5 4z" fill="#111" /></svg>
      </TitleMore>
      <Search aria-label="search" placeholder="键入关键字或短语" />
      <Account>
        <ToolButton aria-label="find"><Icon id="binoc" /></ToolButton>
        <ToolButton aria-label="sign in"><Icon id="user" /></ToolButton>
        <Login>登录</Login>
        <Tools items="v exchange connect v | question v" />
      </Account>
      <WindowButtons>
        <button aria-label="minimize">
          <svg width="10" height="10"><path d="M1 6h9v3h-9z" fill="#fff" /></svg>
        </button>
        <button aria-label="restore">
          <svg width="10" height="10" fill="none" stroke="#fff" strokeWidth="1.5"><path d="M3 3v-2h6v6h-2M1 3h6v6h-6z" /></svg>
        </button>
        <CloseWindow aria-label="close">
          <svg width="10" height="10" stroke="#fff" strokeWidth="2.4"><path d="M1 1l8 8M9 1l-8 8" /></svg>
        </CloseWindow>
      </WindowButtons>
    </TitleBar>
    <MenuBar>
      {MENUS.map((menu) => <MenuItem key={menu}>{menu}</MenuItem>)}
      <DocButtons>
        <button aria-label="minimize drawing"><svg width="9" height="9"><path d="M0 6h8v2h-8z" fill="#222" /></svg></button>
        <button aria-label="restore drawing"><svg width="10" height="9" fill="none" stroke="#222"><path d="M3.5 3v-2.5h6v5h-2M.5 3.5h6v5h-6z" /></svg></button>
        <button aria-label="close drawing"><svg width="9" height="9" stroke="#222" strokeWidth="2"><path d="M1 1l7 7M8 1l-7 7" /></svg></button>
      </DocButtons>
    </MenuBar>
  </HeaderGrid>
);

const Toolbars = () => (
  <ToolbarArea>
    <ToolbarRow>
      <Toolbar $share={551}>
        <Grip />
        <Tools items="new open save | print preview publish dwf | cut copy paste match block | undo v redo v | pan zoom zoomwin zoomprev | props center palette sheet markup calc | help" />
      </Toolbar>
      <Toolbar $share={513}>
        <Grip />
        <Tools items="textstyle" />
        <Picker label="text style" value="Standard" width={101} indent={14} />
        <Tools items="| dimstyle" />
        <Picker label="dimension style" value="ISO-25" width={101} indent={14} />
        <Tools items="| tablestyle" />
        <Picker label="table style" value="Standard" width={102} indent={2} />
        <Tools items="| leaderstyle" />
        <Picker label="leader style" value="Standard" width={101} indent={14} />
      </Toolbar>
      <Rest $share={29} />
    </ToolbarRow>
    <ToolbarRow>
      <Toolbar $share={197}>
        <Grip />
        <Picker label="current workspace" value="AutoCAD 经典" width={148} indent={5} />
        <Tools items="gear workspace" />
      </Toolbar>
      <Toolbar $share={342}>
        <Grip />
        <Tools items="layerprops" />
        <LayerBox>
          {['bulb', 'sun', 'vpfreeze', 'unlock', 'swatch'].map((id) => <Icon key={id} id={id} size={13} />)}
          <Picker label="layer" value="0" indent={1} />
        </LayerBox>
        <Tools items="layermake layerprev layerstate" />
      </Toolbar>
      <Toolbar $share={499}>
        <Grip />
        <LayerBox $width={126}>
          <Icon id="swatch" size={13} />
          <Picker label="color" value="ByLayer" face="serif" />
        </LayerBox>
        <Tools items="|" />
        <Picker label="linetype" value="ByLayer" width={134} face="serif" sample={52} indent={1} />
        <Tools items="|" />
        <Picker label="lineweight" value="ByLayer" width={105} face="serif" sample={30} indent={1} />
        <Tools items="|" />
        <Picker label="plot style" value="BYCOLOR" width={102} face="mono" indent={6} />
      </Toolbar>
      <Rest $share={55} />
    </ToolbarRow>
    <ToolbarRow>
      <Toolbar $share={454}>
        <Grip />
        <Tools items="polysolid box wedge cone sphere cylinder torus pyramid helix planar | extrude presspull sweep revolve loft | union subtract intersect | gizmo rotate3d align array3d" />
      </Toolbar>
      <Toolbar $share={417}>
        <Grip />
        <Tools items="union subtract intersect | extrudeface moveface offsetface deleteface rotateface taperface copyface colorface | filletedge chamferedge copyedge coloredge | imprint clean separate shell check" />
      </Toolbar>
      <Toolbar $share={136}>
        <Grip />
        <Tools items="wire2d | wire3d hidden realistic conceptual | vsmanager" />
      </Toolbar>
      <Rest $share={86} />
    </ToolbarRow>
    <ToolbarRow>
      <Toolbar $share={402}>
        <Grip />
        <Tools items="namedview | vtop vbottom vleft vright vfront vback | isosw isose isone isonw | camera | viewprev" />
        <Picker label="view" value="" width={118} />
      </Toolbar>
      <Rest $share={691} />
    </ToolbarRow>
  </ToolbarArea>
);

const Drawing = () => (
  <DrawingSvg role="img" aria-label="drawing area">
    <g stroke="#c9ccce" fill="none" shapeRendering="crispEdges">
      <path d="M338 169.5h406M338 435.5h406" />
      <path d="M534.5 303.5h8M538.5 299.5v8" stroke="#fff" />
    </g>
    <circle cx="538.5" cy="303" r="165.5" fill="none" stroke="#f4f4f4" />
    <circle cx="538.5" cy="303" r="174" fill="none" stroke="#dcdcdc" strokeDasharray="3 3" />
    <path d="M593.5 0v595" stroke="#c4c6c8" />
    <line x1="0" x2="100%" y1="325.5" y2="325.5" stroke="#f2f2f2" />
    <path d="M615 146L554 226M557 206l-3 21l20-10" stroke="#ff0000" strokeWidth="4" fill="none" strokeLinecap="round" />
    <path d="M11.5 541v42.5h42" stroke="#e4e4e4" fill="none" />
    <path d="M13 525l5.5 6l5.5-6M18.5 531v6M59 571l11 12M70 571l-11 12" stroke="#cfd1d3" fill="none" />
    <ellipse cx="954" cy="93" rx="56" ry="5" fill="none" stroke="#50565c" strokeWidth="2" />
    <path d="M897 92.5h14M999 92.5h13M946 97.5h17" stroke="#a9adb0" strokeDasharray="4 1" />
    <path d="M934 47h42v43h-42z" fill="#b0b1b2" />
    <path d="M941 55h28v27h-28z" fill="#a2a9af" />
    <path d="M954 58v18" stroke="#4d5560" strokeWidth="2" />
    <path d="M942 76.5h25M961 65.5h5" stroke="#5a616b" />
  </DrawingSvg>
);

const Workspace = () => (
  <Main>
    <SideColumn>
      <SideBar $share={384}>
        <Grip $vertical />
        <Tools items={DRAW} vertical />
      </SideBar>
      <Rest $share={226} />
    </SideColumn>
    <DocFrame>
      <Canvas>
        <Drawing />
        <ViewLabel>[−][前视][二维线框]</ViewLabel>
        <UcsButton>未命名 ▽</UcsButton>
      </Canvas>
      <VScroll>
        <ScrollArrow>▴</ScrollArrow>
        <Thumb $tall />
        <ScrollFill />
        <ScrollArrow>▾</ScrollArrow>
      </VScroll>
      <BottomBar>
        {Object.entries(NAV).map(([name, d]) => (
          <NavButton key={name} aria-label={name}>
            <svg width="9" height="9" fill="#555" stroke="#555"><path d={d} strokeWidth=".8" /></svg>
          </NavButton>
        ))}
        <Tab $active>模型</Tab>
        <Tab>布局1</Tab>
        <TabEdge />
        <Tab>布局2</Tab>
        <TabEdge />
        <ScrollFill />
        <HScroll>
          <SplitHandle />
          <ScrollArrow>◂</ScrollArrow>
          <ScrollFill />
          <Thumb />
          <ScrollArrow>▸</ScrollArrow>
        </HScroll>
      </BottomBar>
    </DocFrame>
    <SideColumn>
      <SideBar $share={347}>
        <Grip $vertical />
        <Tools items={MODIFY} vertical />
      </SideBar>
      <SideBar $share={125}>
        <Grip $vertical />
        <Tools items="front back above under | abc hatchback" vertical />
      </SideBar>
      <Rest $share={138} />
    </SideColumn>
  </Main>
);

const CommandLine = () => (
  <CommandArea>
    <CommandSide>
      <GripDots />
      <button aria-label="close command line"><svg width="8" height="8" stroke="#fff" strokeWidth="2"><path d="M0 0l8 8M8 0l-8 8" /></svg></button>
      <button aria-label="command options"><Icon id="wrench" size={12} /></button>
    </CommandSide>
    <CommandBody>
      <History>
        <div><Mixed>{'指定偏移距离或 [通过(T)/删除(E)/图层(L)] <通过>:  10'}</Mixed></div>
        <div><Mixed>{'选择要偏移的对象，或 [退出(E)/放弃(U)] <退出>:'}</Mixed></div>
      </History>
      <Prompt>
        <Icon id="offset" size={14} />
        <PromptCaret />
        <p>
          <Command>OFFSET </Command>
          <Mixed>{'指定要偏移的那一侧上的点，或 ['}</Mixed>
          <Choice>退出<Half>(<b>E</b>)</Half></Choice><Half> </Half>
          <Choice>多个<Half>(<b>M</b>)</Half></Choice><Half> </Half>
          <Choice>放弃<Half>(<b>U</b>)</Half></Choice>
          <Mixed>{'] <退出>:'}</Mixed>
        </p>
      </Prompt>
    </CommandBody>
  </CommandArea>
);

const StatusBar = () => (
  <Status>
    <Coords>1256.1668, 453.4653, 0.0000</Coords>
    {TOGGLES.map((id) => (
      <Toggle key={id} aria-label={id} $on={ACTIVE.includes(id)}><Icon id={id} size={14} /></Toggle>
    ))}
    <StatusGap $grow />
    <Toggle $width={27}>模型</Toggle>
    <Toggle aria-label="model"><Icon id="model" size={14} /></Toggle>
    <Toggle aria-label="layouts"><Icon id="layouts" size={14} /></Toggle>
    <StatusGap $width={15} />
    <Toggle $width={46}><Icon id="anno" size={13} /><Half>1:1</Half><Caret /></Toggle>
    <Toggle aria-label="annotation visibility"><Icon id="annovis" size={14} /></Toggle>
    <Toggle aria-label="annotation scale"><Icon id="annoauto" size={14} /></Toggle>
    <StatusGap $width={5} />
    <Toggle aria-label="workspace switching"><Icon id="gearDark" size={14} /></Toggle>
    <Toggle aria-label="lock"><Icon id="lock" size={14} /></Toggle>
    <Toggle aria-label="hardware acceleration"><Icon id="hardware" size={14} /></Toggle>
    <Toggle aria-label="isolate objects" $width={26} $pressed><Icon id="isolate" size={14} /></Toggle>
    <Toggle $width={13} aria-label="status menu"><Caret /></Toggle>
    <Toggle aria-label="clean screen"><Icon id="cleanscreen" size={14} /></Toggle>
  </Status>
);

const Watermark = () => (
  <Mark>
    <MarkRow>
      <MarkText>Bai</MarkText>
      <Paw>
        <svg width="60" height="64" viewBox="0 0 60 64" fill="#fff" fillOpacity=".78" aria-hidden="true">
          <ellipse cx="9" cy="25" rx="7" ry="9" />
          <ellipse cx="23" cy="11" rx="7" ry="10" />
          <ellipse cx="41" cy="12" rx="7" ry="10" />
          <ellipse cx="52" cy="29" rx="7" ry="9" />
          <path d="M30 26c-6 0-9 5-13 11c-4 5-11 9-11 16c0 8 7 10 13 9c7-1 15-1 22 0c6 1 13-1 13-9c0-7-7-11-11-16c-4-6-7-11-13-11z" />
        </svg>
        <PawText>du</PawText>
      </Paw>
      <MarkText $cjk>经验</MarkText>
    </MarkRow>
    <MarkUrl>jingyan.baidu.com</MarkUrl>
  </Mark>
);

const App = () => (
  <Page>
    <GlobalStyle />
    <Header />
    <Toolbars />
    <Workspace />
    <DimensionRow>
      <Toolbar $share={547}>
        <Grip />
        <Tools items="dlinear daligned darc dord | drad djog ddia dang | dquick dbase dcont dspace dbreak | tol cmark dinspect djogline | dedit dtedit dupdate |" />
        <Picker label="current dimension style" value="ISO-25" width={102} indent={14} />
        <Tools items="dimstyle" />
      </Toolbar>
      <Rest $share={520} />
    </DimensionRow>
    <CommandLine />
    <StatusBar />
    <Taskbar />
    <Watermark />
  </Page>
);

const GlobalStyle = createGlobalStyle`
  *, *::before, *::after {
    box-sizing: border-box;
  }

  body {
    margin: 0;
    font-family: 'Noto Sans', 'Noto Sans CJK SC', sans-serif;
    font-size: 11px;
    line-height: 1;
  }

  button {
    display: inline-flex;
    align-items: center;
    justify-content: center;
    padding: 0;
    border: 0;
    background: none;
    color: inherit;
    font: inherit;
  }

  svg {
    display: block;
    flex: none;
  }

  p {
    margin: 0;
  }
`;

const Page = styled.div`
  position: relative;
  display: flex;
  flex-direction: column;
  min-height: 100vh;
  background: ${COLORS.frame};
  border-left: 2px solid #d6e4f0;
  border-right: 3px solid #e6edf7;
  overflow: hidden;
`;

const HeaderGrid = styled.header`
  display: grid;
  grid-template-columns: 34px 1fr;
  grid-template-rows: 20px 18px;
  background: linear-gradient(#8b8b8b, #5e5e5e);
`;

const AppButton = styled.button`
  grid-row: 1 / 3;
  && {
    justify-content: space-between;
    padding: 0 1px;
    margin-bottom: 3px;
    background: linear-gradient(#d4d4d4, #8a8a8a);
    border: 1px solid #4e4e4e;
  }
`;

const Caret = styled.i`
  border: ${(p) => (p.$small ? '2px' : '3px')} solid transparent;
  border-top-color: ${(p) => (p.$small ? '#555' : '#222')};
  border-bottom: 0;
`;

const TitleBar = styled.div`
  display: flex;
  min-width: 0;
  background: linear-gradient(#b4b4b4, #8b8b8b);
`;

const QuickAccess = styled.div`
  flex: 191 1 0;
  display: flex;
  align-items: center;
  justify-content: space-between;
  padding: 0 1px 0 7px;
`;

const WorkspaceBox = styled.div`
  flex: 149 1 0;
  display: flex;
  align-items: center;
  padding-left: 2px;
  background: linear-gradient(#cfcfcf, #b5b5b5);
  border: 1px solid #828282;
`;

const TitleMore = styled.button`
  flex: none;
  width: 12px;
  && {
    background: #999;
    border: 1px solid #777;
  }
`;

const Title = styled.div`
  flex: 210 1 0;
  display: flex;
  align-items: center;
  justify-content: center;
  gap: 14px;
  color: #0b1c33;
  white-space: nowrap;
  background: linear-gradient(90deg, #2a69b8, #1f62ae 12%, #4b86c4 24%, #2c6cb4 50%, #8fb8dd 70%, #2b73bb 85%, #b9d4dc 96%, #3a76b5);
`;

const Search = styled.input`
  flex: 147 1 0;
  min-width: 0;
  padding: 0 2px;
  border: 1px solid #888;
  background: #f5f5f5;
  font: italic 10px 'Noto Sans CJK SC', sans-serif;

  &::placeholder {
    color: #666;
  }
`;

const Account = styled.div`
  flex: 208 1 0;
  display: flex;
  align-items: center;
  gap: 5px;
  padding: 0 4px 0 3px;
`;

const Login = styled.button`
  && {
    flex: 1;
    justify-content: flex-start;
    color: #fff;
  }
`;

const WindowButtons = styled.div`
  flex: 87 1 0;
  display: flex;
  padding: 0 2px 4px 16px;
  background: linear-gradient(100deg, #cfe4ee 5%, #3d6fa3 20%, #35699f 50%, #a9c8d2 62%, #38699d 75%);

  button {
    flex: 25;
    border: 1px solid #6f93b6;
    border-top: 0;
  }
`;

const CloseWindow = styled.button`
  && {
    flex: 40;
  }
`;

const MenuBar = styled.nav`
  display: flex;
  align-items: center;
  gap: 19px;
  padding: 0 4px 0 12px;
  background: linear-gradient(#9a9a9a, #5c5c5c);
`;

const MenuItem = styled.button`
  && {
    color: #f4f4f4;
    font-size: 11px;
    font-family: 'Open Sans', 'Noto Sans CJK SC', sans-serif;
    white-space: nowrap;
  }
`;

const DocButtons = styled.div`
  display: flex;
  gap: 6px;
  margin-left: auto;
`;

const ToolbarArea = styled.div`
  display: flex;
  flex-direction: column;
  gap: 3px;
  padding: 1px 0 4px;
`;

const ToolbarRow = styled.div`
  display: flex;
`;

const Toolbar = styled.div`
  flex: ${(p) => p.$share} 1 0;
  min-width: 0;
  height: 20px;
  display: flex;
  align-items: center;
  justify-content: space-between;
  padding-right: 2px;
  background: ${COLORS.panel};
  border: 1px solid #494949;
  border-left: 0;
`;

const Rest = styled.div`
  flex: ${(p) => p.$share} 1 0;
`;

const Grip = styled.span`
  flex: none;
  align-self: stretch;
  width: ${(p) => (p.$vertical ? 'auto' : '7px')};
  height: ${(p) => (p.$vertical ? '7px' : 'auto')};
  padding: ${(p) => (p.$vertical ? '2px 3px' : '3px 2px')};
  background: radial-gradient(circle, #2c2c2c 30%, #6a6a6a 60%) content-box #5c5c5c;
  background-size: 2px 2px;
`;

const ToolButton = styled.button`
  flex: none;
  width: 16px;
  height: 16px;
`;

const MoreButton = styled.button`
  flex: none;
  width: 7px;
  height: 16px;
`;

const Separator = styled.span`
  flex: none;
  width: ${(p) => (p.$vertical ? '16px' : '1px')};
  height: ${(p) => (p.$vertical ? '1px' : '16px')};
  background: #999;
`;

const PickerBox = styled.label`
  position: relative;
  flex: ${(p) => (p.$grow ? '1 1 0' : '0 1 auto')};
  width: ${(p) => (p.$width ? `${p.$width}px` : 'auto')};
  min-width: 0;
  height: 18px;
  display: flex;
  align-items: center;
  background: ${(p) => (p.$grow ? 'transparent' : '#f3f3f3')};
  border: ${(p) => (p.$grow ? '0' : '1px solid #aaa')};
  border-radius: 2px;
`;

const FACES = {
  serif: "10px 'Liberation Serif', serif",
  mono: "9px 'Liberation Mono', monospace",
  sans: "11px 'Noto Sans', 'Noto Sans CJK SC', sans-serif",
};

const PickerSelect = styled.select`
  flex: 1;
  min-width: 0;
  height: 16px;
  appearance: none;
  padding: 0 0 0 ${(p) => p.$indent || 0}px;
  border: 0;
  background: transparent;
  color: #666;
  font: ${(p) => FACES[p.$face || 'sans']};
`;

const PickerArrow = styled.i`
  margin-right: 3px;
  border: 3px solid transparent;
  border-top: 4px solid #999;
  border-bottom: 0;
`;

const Sample = styled.span`
  flex: none;
  width: ${(p) => p.$width}px;
  height: 1px;
  margin: 0 2px 0 4px;
  background: #333;
`;

const LayerBox = styled.div`
  flex: none;
  width: ${(p) => p.$width || 255}px;
  height: 18px;
  display: flex;
  align-items: center;
  gap: 1px;
  padding-left: 2px;
  background: #f3f3f3;
  border: 1px solid #aaa;
  border-radius: 2px;
`;

const Main = styled.main`
  flex: 1;
  display: flex;
  gap: 4px;
  min-height: 0;
  padding-right: 3px;
`;

const SideColumn = styled.div`
  flex: none;
  width: 20px;
  display: flex;
  flex-direction: column;
`;

const SideBar = styled.div`
  flex: ${(p) => p.$share} 1 0;
  display: flex;
  flex-direction: column;
  align-items: center;
  justify-content: space-between;
  padding-bottom: 1px;
  background: ${COLORS.panel};
  border: 1px solid #4c4c4c;
`;

const DocFrame = styled.section`
  flex: 1;
  min-width: 0;
  display: grid;
  grid-template-columns: 1fr 16px;
  grid-template-rows: 1fr 13px;
  border: 1px solid #8f8f8f;
`;

const Canvas = styled.div`
  position: relative;
  overflow: hidden;
  background: ${COLORS.canvas};
`;

const DrawingSvg = styled.svg`
  position: absolute;
  inset: 0;
  width: 100%;
  height: 100%;
`;

const ViewLabel = styled.span`
  position: absolute;
  top: 3px;
  left: 4px;
  color: #dcdcdc;
  font: 11px 'Liberation Sans', 'Noto Sans CJK SC', sans-serif;
`;

const UcsButton = styled.button`
  position: absolute;
  top: 142px;
  right: 45px;
  && {
    padding: 0 4px;
    height: 15px;
    border: 1px solid #8d919c;
    border-radius: 3px;
    background: #a5a8b5;
    color: #666b78;
    font: 9px 'Noto Sans CJK SC', sans-serif;
    white-space: nowrap;
  }
`;

const VScroll = styled.div`
  display: flex;
  flex-direction: column;
  align-items: center;
  background: #efefef;
`;

const ScrollArrow = styled.button`
  flex: none;
  width: 15px;
  height: 14px;
  && {
    color: #333;
    font-size: 8px;
  }
`;

const Thumb = styled.div`
  flex: none;
  width: 13px;
  height: ${(p) => (p.$tall ? '13px' : '11px')};
  background: linear-gradient(#f6f6f6, #c4c4c4);
  border: 1px solid #8e8e8e;
  border-radius: 1px;
`;

const ScrollFill = styled.span`
  flex: 1;
`;

const BottomBar = styled.div`
  grid-column: 1 / 3;
  display: flex;
  align-items: center;
  padding-right: 16px;
  background: #eee;
`;

const NavButton = styled.button`
  width: 12px;
  height: 12px;
  && {
    border-right: 1px solid #bbb;
  }
`;

const Tab = styled.button`
  height: 13px;
  && {
    padding: 0 ${(p) => (p.$active ? '8px' : '6px')};
    font: 11px 'Liberation Sans', 'Noto Sans CJK SC', sans-serif;
    color: ${(p) => (p.$active ? '#fff' : '#222')};
    background: ${(p) => (p.$active ? COLORS.canvas : 'none')};
    clip-path: ${(p) => (p.$active ? 'polygon(0 0, 100% 0, 86% 100%, 14% 100%)' : 'none')};
  }
`;

const TabEdge = styled.i`
  width: 1px;
  height: 13px;
  background: #555;
  transform: rotate(25deg);
`;

const HScroll = styled.div`
  flex: 0 0 34%;
  display: flex;
  align-items: center;
`;

const SplitHandle = styled.span`
  width: 4px;
  height: 11px;
  border: 1px solid #aaa;
  background: #fff;
`;

const DimensionRow = styled.div`
  display: flex;
  padding: 4px 0 6px 25px;
`;

const CommandArea = styled.section`
  display: flex;
  height: 49px;
`;

const CommandSide = styled.div`
  flex: none;
  width: 18px;
  display: flex;
  flex-direction: column;
  align-items: center;
  justify-content: space-between;
  padding: 3px 0 4px;
  background: linear-gradient(90deg, #8c8c8c, #666);
`;

const GripDots = styled.span`
  width: 14px;
  height: 4px;
  background-image: radial-gradient(#ccc 40%, transparent 50%);
  background-size: 2px 2px;
`;

const CommandBody = styled.div`
  flex: 1;
  min-width: 0;
  display: flex;
  flex-direction: column;
  color: #111;
  font: 12px/13px 'Noto Sans CJK SC', sans-serif;
  white-space: pre;
`;

const History = styled.div`
  height: 29px;
  padding: 1px 3px;
  background: #c8c8c8;
  border-bottom: 1px solid #aaa;
`;

const Half = styled.span`
  font-family: 'Liberation Mono', monospace;
  font-size: 10px;
  line-height: 0;
`;

const Prompt = styled.div`
  flex: 1;
  display: flex;
  align-items: center;
  gap: 3px;
  padding: 0 5px;
  background: #fff;
`;

const PromptCaret = styled(Caret)`
  border-top-color: #888;
`;

const Command = styled.strong`
  font-family: 'Liberation Mono', monospace;
  font-size: 10px;
  line-height: 0;
`;

const Choice = styled.span`
  display: inline-block;
  line-height: 14px;
  background: #d2d2d2;
  border-radius: 3px;

  b {
    color: #1414e0;
  }
`;

const Status = styled.footer`
  display: flex;
  height: 20px;
  color: #111;
  background: linear-gradient(#8f8f8f, #6f6f6f);
  border-top: 1px solid #333;
`;

const Coords = styled.output`
  flex: none;
  width: 179px;
  padding: 6px 0 0 9px;
  background: #a0a0a0;
  font: 9px/10px 'Liberation Mono', monospace;
  white-space: nowrap;
`;

const statusFill = (p) => {
  if (p.$pressed) return '#77746a';
  return p.$on ? 'linear-gradient(#d7eef5, #a5d3e4)' : 'linear-gradient(#bdbdbd, #8f8f8f)';
};

const Toggle = styled.button`
  flex: 0 0 ${(p) => p.$width || 19}px;
  && {
    gap: 1px;
    background: ${statusFill};
    border-left: 1px solid #555;
    font: 11px 'Noto Sans CJK SC', sans-serif;
    white-space: nowrap;
  }
`;

const StatusGap = styled.span`
  flex: ${(p) => (p.$grow ? '1' : `0 0 ${p.$width}px`)};
  border-left: 1px solid #555;
`;

const Taskbar = styled.div`
  height: 2px;
  background: linear-gradient(90deg, #2f6fa8, #8db9d8 40%, #2c6ca5 60%, #24598c);
`;

const Mark = styled.div`
  position: absolute;
  right: 57px;
  bottom: 22px;
  color: rgb(255 255 255 / 0.75);
  text-shadow: 0 0 2px rgb(90 90 90 / 0.5);
  pointer-events: none;
`;

const MarkRow = styled.div`
  display: flex;
  align-items: flex-end;
`;

const MarkText = styled.span`
  font: ${(p) => (p.$cjk ? "bold 33px/40px 'Noto Sans CJK SC', sans-serif" : "bold 43px/42px 'Liberation Sans', sans-serif")};
`;

const Paw = styled.div`
  position: relative;
`;

const PawText = styled.span`
  position: absolute;
  left: 0;
  right: 0;
  bottom: 3px;
  color: #a4a4a4;
  text-align: center;
  font: bold 28px/28px 'Liberation Sans', sans-serif;
`;

const MarkUrl = styled.div`
  font: 23px/28px 'Open Sans', sans-serif;
`;

export default App;
